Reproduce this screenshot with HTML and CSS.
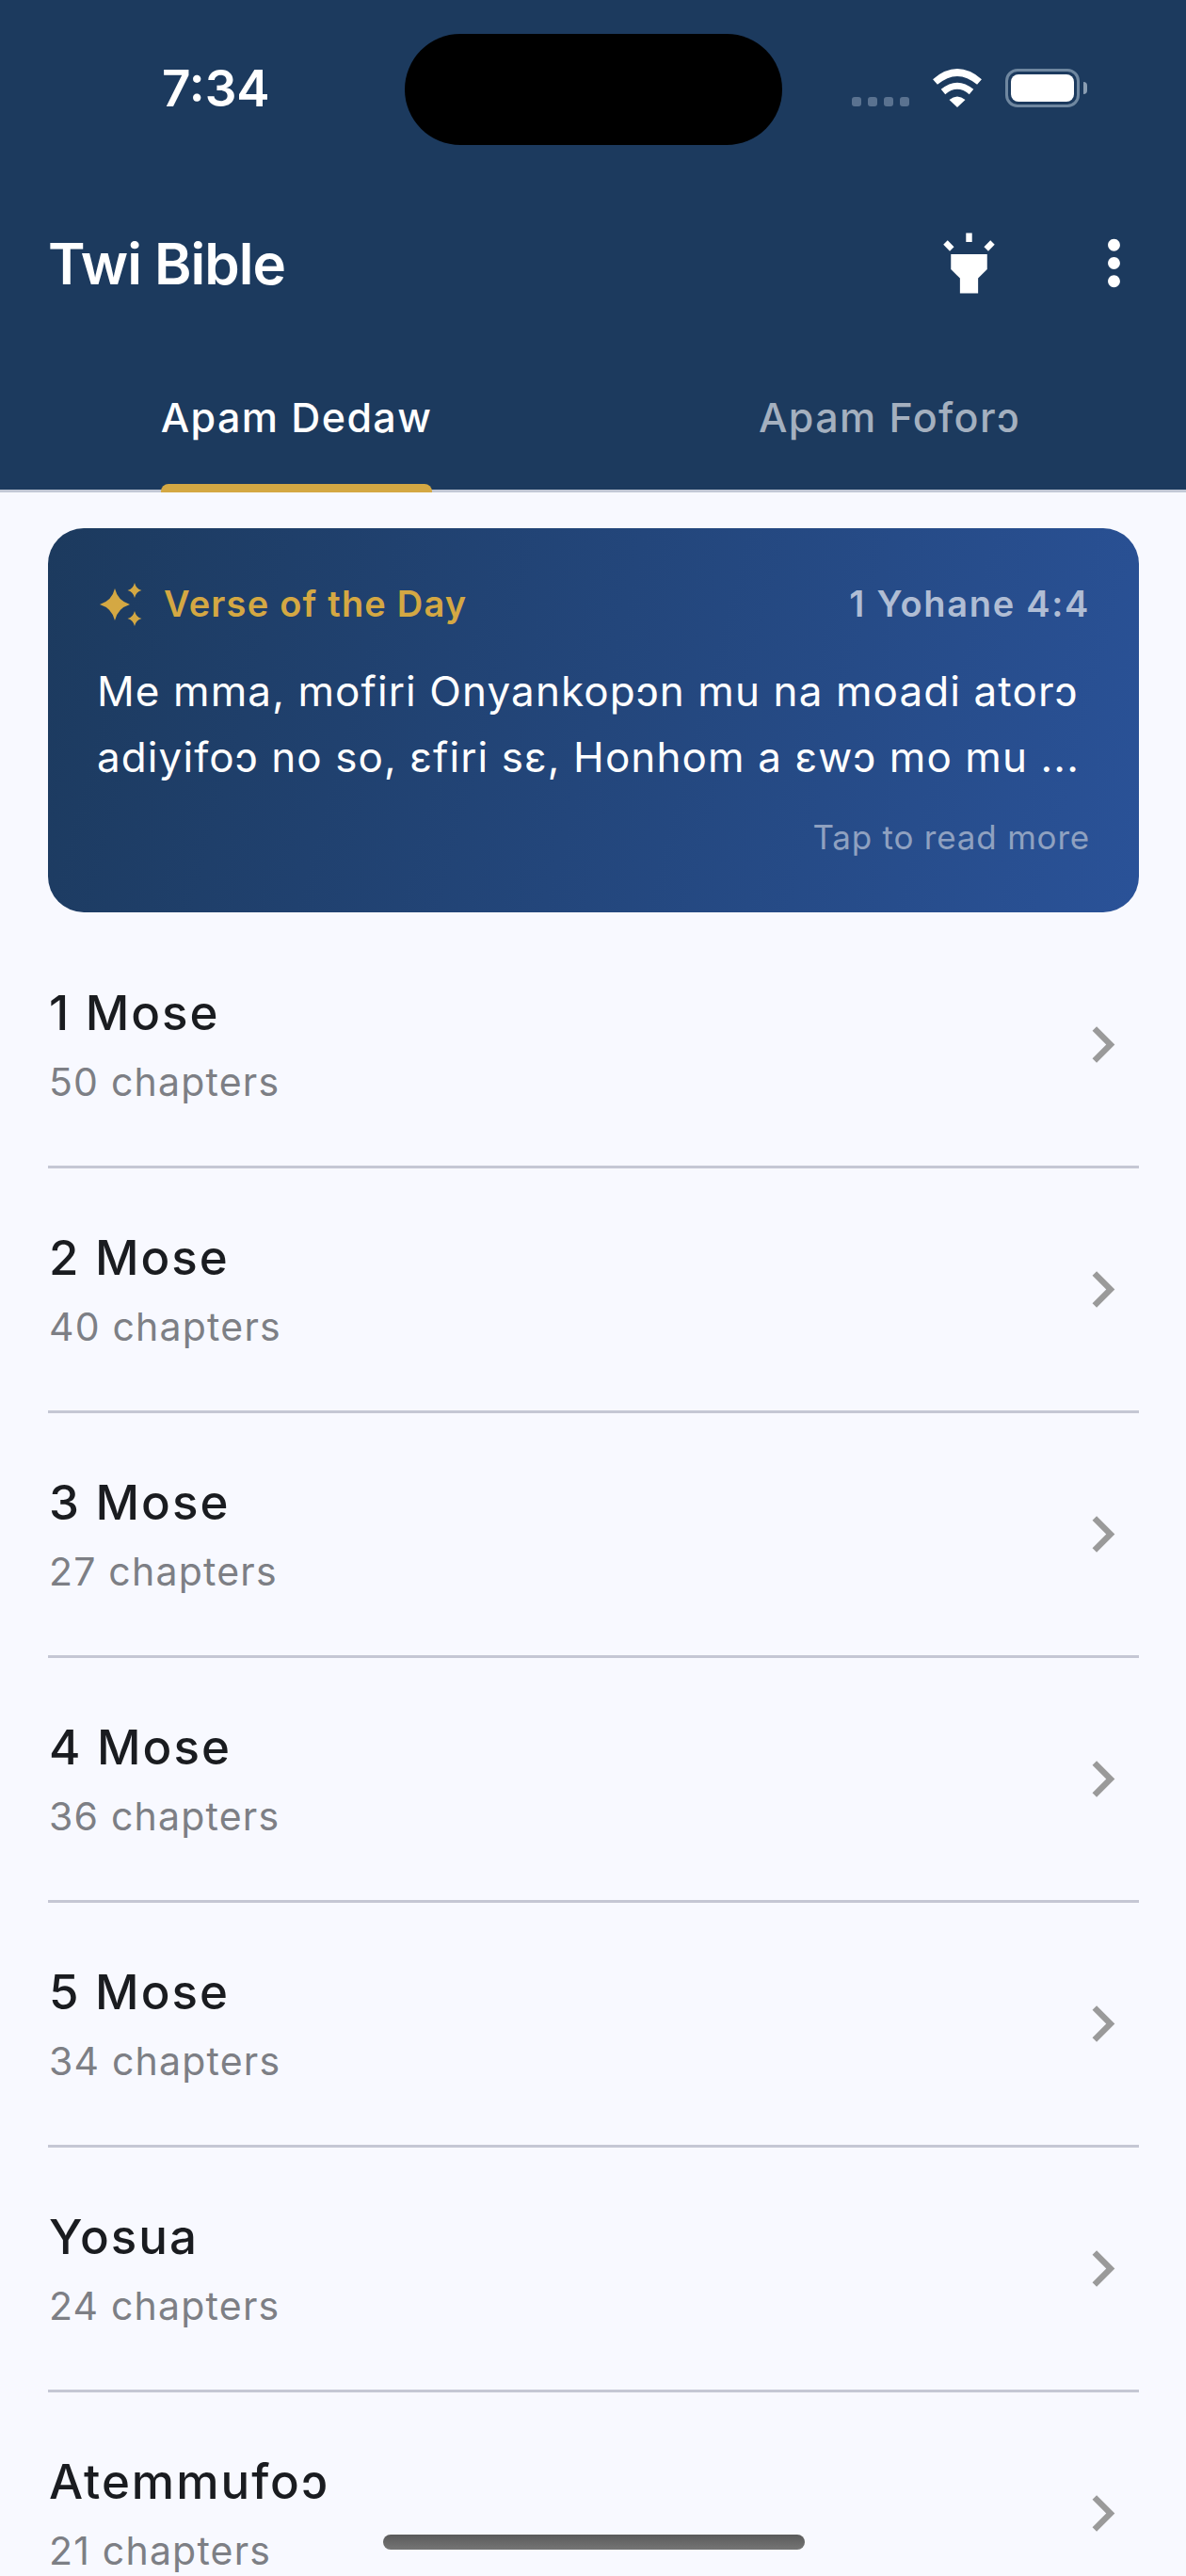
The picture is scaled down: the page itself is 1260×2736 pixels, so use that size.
FILE: index.html
```html
<!DOCTYPE html>
<html lang="en">
<head>
    <meta charset="UTF-8">
    <meta name="viewport" content="width=device-width, initial-scale=1.0">
    <title>Twi Bible</title>
    <link rel="stylesheet" href="styles.css">
</head>
<body>
<div class="screen">

    <header class="top">
        <div class="status">
            <span class="time">7:34</span>
            <div class="status-icons">
                <div class="signal"><i></i><i></i><i></i><i></i></div>
                <svg class="wifi" viewBox="0 0 54 41" width="54" height="41">
                    <path d="M3.5 14 Q27 -6 50.5 14" fill="none" stroke="#fff" stroke-width="7.5"/>
                    <path d="M12 24.5 Q27 12 42 24.5" fill="none" stroke="#fff" stroke-width="7"/>
                    <path d="M18.5 33 Q27 26 35.5 33 L27 41 Z" fill="#fff"/>
                </svg>
                <div class="battery"><div class="battery-fill"></div></div>
                <div class="battery-cap"></div>
            </div>
            <div class="island"></div>
        </div>

        <div class="appbar">
            <h1>Twi Bible</h1>
            <button class="icon-btn" type="button">
                <svg viewBox="0 0 24 24" width="77" height="77"><path fill="#fff" d="M6 14l3 3v5h6v-5l3-3V9H6v5zm5-12h2v3h-2V2zM3.5 5.88l1.41-1.41 2.12 2.12L5.62 8 3.5 5.88zm13.46.71l2.12-2.12 1.41 1.41L18.38 8l-1.42-1.41z"/></svg>
            </button>
            <button class="icon-btn" type="button">
                <svg viewBox="0 0 24 24" width="77" height="77"><path fill="#fff" d="M12 8c1.1 0 2-.9 2-2s-.9-2-2-2-2 .9-2 2 .9 2 2 2zm0 2c-1.1 0-2 .9-2 2s.9 2 2 2 2-.9 2-2-.9-2-2-2zm0 6c-1.1 0-2 .9-2 2s.9 2 2 2 2-.9 2-2-.9-2-2-2z"/></svg>
            </button>
        </div>

        <div class="tabs">
            <div class="tab active"><span>Apam Dedaw</span></div>
            <div class="tab"><span>Apam Foforɔ</span></div>
        </div>
    </header>

    <main class="content">
        <section class="verse">
            <div class="verse-head">
                <svg class="spark" viewBox="0 0 51 51" width="51" height="51">
                    <path fill="#d4a843" d="M19 9 Q22 22 35 26 Q22 30 19 43 Q16 30 3 26 Q16 22 19 9Z"/>
                    <path fill="#d4a843" d="M40 3 Q41.500 9.500 47.500 11 Q41.500 12.500 40 19 Q38.500 12.500 32.500 11 Q38.500 9.500 40 3Z"/>
                    <path fill="#d4a843" d="M40 33 Q41.500 39.500 47.500 41 Q41.500 42.500 40 49 Q38.500 42.500 32.500 41 Q38.500 39.500 40 33Z"/>
                </svg>
                <span class="verse-label">Verse of the Day</span>
                <span class="verse-ref">1 Yohane 4:4</span>
            </div>
            <p class="verse-text">Me mma, mofiri Onyankopɔn mu na moadi atorɔ adiyifoɔ no so, ɛfiri sɛ, Honhom a ɛwɔ mo mu ...</p>
            <div class="verse-more">Tap to read more</div>
        </section>

        <ul class="books">
            <li><div><h2>1 Mose</h2><p>50 chapters</p></div><svg viewBox="0 0 24 24" width="77" height="77"><path fill="#9a9a9a" d="M10 6L8.59 7.41 13.17 12l-4.58 4.59L10 18l6-6z"/></svg></li>
            <li><div><h2>2 Mose</h2><p>40 chapters</p></div><svg viewBox="0 0 24 24" width="77" height="77"><path fill="#9a9a9a" d="M10 6L8.59 7.41 13.17 12l-4.58 4.59L10 18l6-6z"/></svg></li>
            <li><div><h2>3 Mose</h2><p>27 chapters</p></div><svg viewBox="0 0 24 24" width="77" height="77"><path fill="#9a9a9a" d="M10 6L8.59 7.41 13.17 12l-4.58 4.59L10 18l6-6z"/></svg></li>
            <li><div><h2>4 Mose</h2><p>36 chapters</p></div><svg viewBox="0 0 24 24" width="77" height="77"><path fill="#9a9a9a" d="M10 6L8.59 7.41 13.17 12l-4.58 4.59L10 18l6-6z"/></svg></li>
            <li><div><h2>5 Mose</h2><p>34 chapters</p></div><svg viewBox="0 0 24 24" width="77" height="77"><path fill="#9a9a9a" d="M10 6L8.59 7.41 13.17 12l-4.58 4.59L10 18l6-6z"/></svg></li>
            <li><div><h2>Yosua</h2><p>24 chapters</p></div><svg viewBox="0 0 24 24" width="77" height="77"><path fill="#9a9a9a" d="M10 6L8.59 7.41 13.17 12l-4.58 4.59L10 18l6-6z"/></svg></li>
            <li><div><h2>Atemmufoɔ</h2><p>21 chapters</p></div><svg viewBox="0 0 24 24" width="77" height="77"><path fill="#9a9a9a" d="M10 6L8.59 7.41 13.17 12l-4.58 4.59L10 18l6-6z"/></svg></li>
        </ul>
    </main>

    <div class="home-bar"></div>
</div>
</body>
</html>
```

FILE: styles.css
```css
* {
    box-sizing: border-box;
}

html, body {
    margin: 0;
    padding: 0;
}

body {
    font-family: 'Inter', 'Noto Sans', sans-serif;
    background-color: #f8f9ff;
}

.screen {
    position: relative;
    width: 1260px;
    height: 2736px;
    overflow: hidden;
    background-color: #f8f9ff;
}

/* header */
.top {
    background-color: #1c3a5e;
    color: white;
}

.status {
    position: relative;
    height: 190px;
}

.time {
    position: absolute;
    left: 172px;
    top: 63px;
    font-size: 53px;
    line-height: 62px;
    font-weight: 600;
}

.island {
    position: absolute;
    left: 430px;
    top: 36px;
    width: 401px;
    height: 118px;
    border-radius: 59px;
    background-color: #000;
}

.status-icons {
    display: flex;
    align-items: flex-start;
    padding: 73px 104px 0 905px;
}

.signal {
    display: flex;
    gap: 7px;
    margin-top: 30px;
    margin-right: 24px;
}

.signal i {
    display: block;
    width: 10px;
    height: 10px;
    border-radius: 3px;
    background-color: #5a7290;
}

.wifi {
    margin-right: 24px;
}

.battery {
    width: 79px;
    height: 41px;
    padding: 3px;
    border: 3px solid #6f87a0;
    border-radius: 13px;
}

.battery-fill {
    width: 100%;
    height: 100%;
    border-radius: 8px;
    background-color: white;
}

.battery-cap {
    width: 4px;
    height: 13px;
    margin: 14px 0 0 4px;
    border-radius: 0 4px 4px 0;
    background-color: #8a9db2;
}

.appbar {
    display: flex;
    align-items: center;
    height: 179px;
    padding-left: 51px;
}

.appbar h1 {
    flex: 1;
    margin: 0;
    font-size: 60px;
    font-weight: 600;
    letter-spacing: -1px;
}

.icon-btn {
    display: flex;
    align-items: center;
    justify-content: center;
    width: 154px;
    height: 154px;
    padding: 0;
    border: none;
    background: none;
}

.tabs {
    display: flex;
    height: 154px;
    border-bottom: 3px solid #c3c8d6;
}

.tab {
    flex: 1;
    display: flex;
    justify-content: center;
    font-size: 43px;
    font-weight: 500;
    letter-spacing: 1.4px;
    color: #a4b0bf;
}

.tab span {
    position: relative;
    display: flex;
    align-items: center;
    padding-bottom: 4px;
}

.tab.active {
    color: white;
}

.tab.active span::after {
    content: "";
    position: absolute;
    left: 0;
    right: 0;
    bottom: -3px;
    height: 9px;
    border-radius: 8px 8px 0 0;
    background-color: #d4a843;
}

/* verse card */
.content {
    padding: 38px 50px 0 51px;
}

.verse {
    height: 408px;
    padding: 55px 52px 0;
    border-radius: 38px;
    background: linear-gradient(105deg, #1c3a5e, #2a5298);
    color: white;
}

.verse-head {
    display: flex;
    align-items: center;
    height: 50px;
}

.spark {
    margin-right: 20px;
}

.verse-label {
    flex: 1;
    font-size: 38px;
    font-weight: 600;
    letter-spacing: 1.2px;
    color: #d4a843;
}

.verse-ref {
    font-size: 38px;
    font-weight: 600;
    letter-spacing: 1.7px;
    color: #b0bdd4;
}

.verse-text {
    margin: 33px 0 0;
    font-size: 44px;
    line-height: 70px;
    letter-spacing: 1.1px;
}

.verse-more {
    margin-top: 29px;
    text-align: right;
    font-size: 35px;
    letter-spacing: 0.8px;
    color: #8fa1c0;
}

/* book list */
.books {
    list-style: none;
    margin: 12px 0 0;
    padding: 0;
}

.books li {
    display: flex;
    align-items: center;
    justify-content: space-between;
    height: 260px;
    border-bottom: 3px solid #c5c7d4;
}

.books li div {
    padding-left: 1px;
}

.books h2 {
    margin: 0;
    font-size: 51px;
    font-weight: 500;
    letter-spacing: 2px;
    color: #1a1c20;
}

.books p {
    margin: 18px 0 0;
    font-size: 41px;
    letter-spacing: 1.2px;
    color: #7d7f85;
}

.home-bar {
    position: absolute;
    left: 407px;
    top: 2692px;
    width: 448px;
    height: 16px;
    border-radius: 8px;
    background: linear-gradient(#5a5a5a, #757575);
}
```
